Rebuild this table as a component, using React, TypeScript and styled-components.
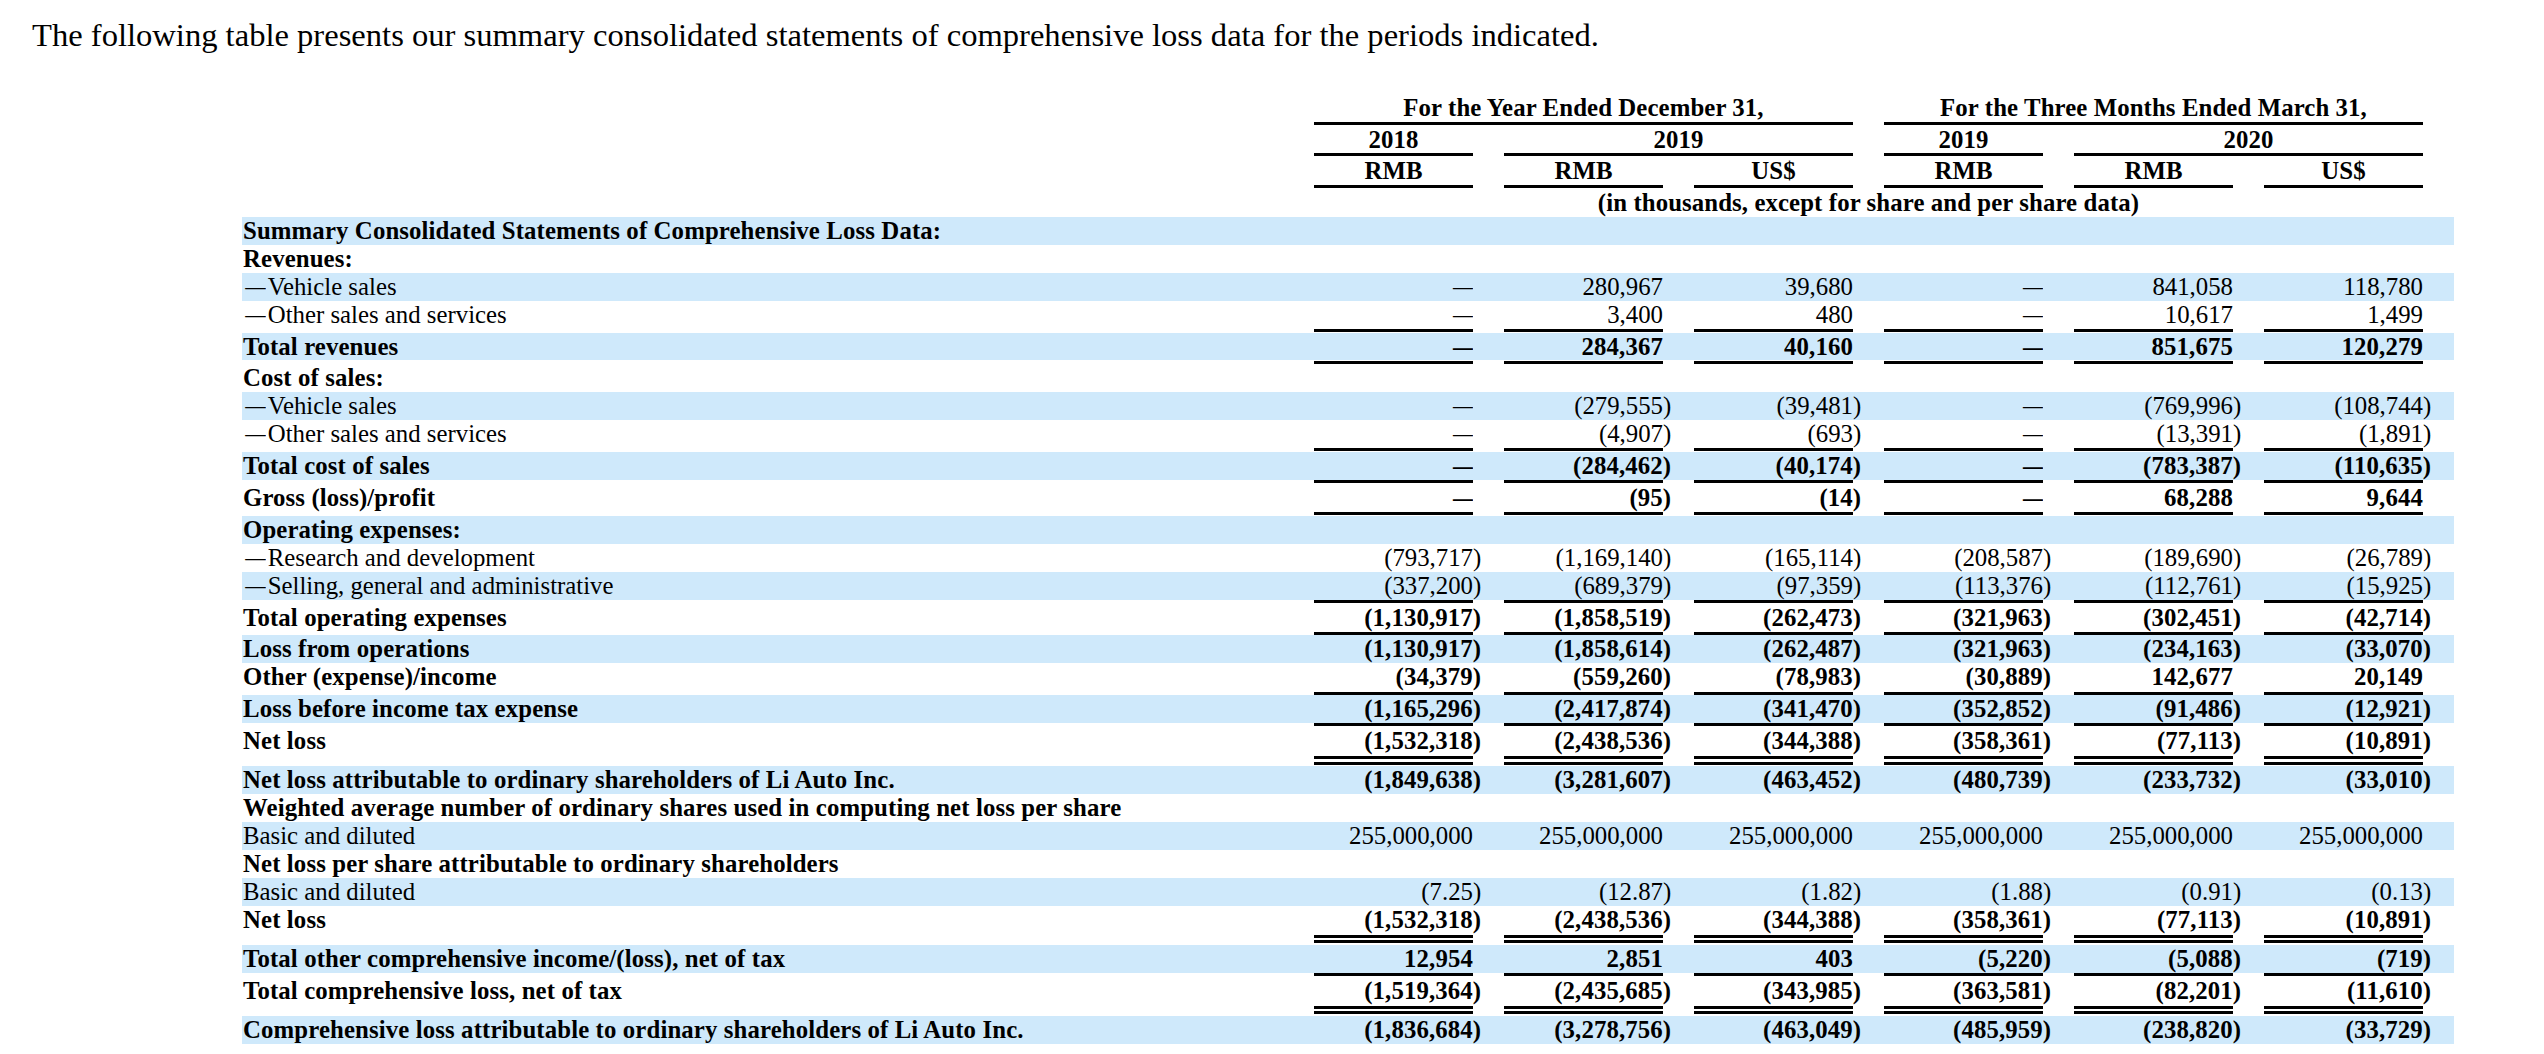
import React from "react";
import styled, { createGlobalStyle } from "styled-components";

const STRIPE = "#cfe9fb";
const COLS = "1fr repeat(6, 31px 159px) 31px";

const GlobalStyle = createGlobalStyle`
  html, body { margin: 0; padding: 0; background: #ffffff; }
  body {
    font-family: "Liberation Serif", "Times New Roman", Times, serif;
    color: #000;
  }
`;

const Page = styled.div`
  width: 2544px;
  min-height: 1054px;
  box-sizing: border-box;
  padding: 16px 0 0 32px;
`;

const Intro = styled.p`
  margin: 0;
  font-size: 32.6px;
  line-height: 38px;
  white-space: nowrap;
`;

const Table = styled.div`
  width: 2212px;
  margin: 40px 0 0 210px;
  font-size: 24.8px;
  line-height: 27.9px;
`;

const HeadRow = styled.div<{ $last?: boolean }>`
  display: grid;
  grid-template-columns: ${COLS};
  align-items: start;
  padding-bottom: ${(p) => (p.$last ? 0.6 : 0)}px;
`;

const HeadCell = styled.div<{ $from: number; $to: number; $rule?: boolean }>`
  grid-column: ${(p) => p.$from} / ${(p) => p.$to};
  text-align: center;
  font-weight: 700;
  letter-spacing: 0.1px;
  white-space: nowrap;
  border-bottom: ${(p) => (p.$rule ? "3.4px solid #000" : "0")};
  margin-bottom: ${(p) => (p.$rule ? 0.6 : 0)}px;
`;

const Row = styled.div<{ $shade: boolean; $bold?: boolean }>`
  display: grid;
  grid-template-columns: ${COLS};
  height: 27.9px;
  background: ${(p) => (p.$shade ? STRIPE : "transparent")};
  font-weight: ${(p) => (p.$bold ? 700 : 400)};
  letter-spacing: ${(p) => (p.$bold ? "0.12px" : "0")};
`;

const Label = styled.div`
  grid-column: 1 / 2;
  padding-left: 1px;
  white-space: nowrap;
`;

const LabelDash = styled.span`
  display: inline-block;
  transform: scaleX(0.82);
  transform-origin: center;
`;

const Num = styled.div<{ $col: number }>`
  grid-column: ${(p) => p.$col * 2 + 1};
  text-align: right;
  white-space: nowrap;
`;

const Close = styled.span`
  margin-right: -0.333em;
`;

const Dash = styled.span`
  display: inline-block;
  transform: scaleX(0.8);
  transform-origin: right center;
`;

const RuleRow = styled.div<{ $double?: boolean }>`
  display: grid;
  grid-template-columns: ${COLS};
  align-items: start;
  height: ${(p) => (p.$double ? 11.2 : 4)}px;
`;

const RuleSeg = styled.div<{ $col: number; $double?: boolean }>`
  grid-column: ${(p) => p.$col * 2 + 1};
  box-sizing: content-box;
  height: ${(p) => (p.$double ? 2.7 : 0)}px;
  border-top: 3.4px solid #000;
  border-bottom: ${(p) => (p.$double ? "3.3px solid #000" : "0")};
  margin-top: ${(p) => (p.$double ? 1.2 : 0.3)}px;
`;

type Rule = "single" | "double";
type Line = {
  label: string;
  bold?: boolean;
  dash?: boolean;
  values?: string[];
  rule?: Rule;
};

const D = "—";

const LINES: Line[] = [
  { label: "Summary Consolidated Statements of Comprehensive Loss Data:", bold: true },
  { label: "Revenues:", bold: true },
  { label: "Vehicle sales", dash: true, values: [D, "280,967", "39,680", D, "841,058", "118,780"] },
  { label: "Other sales and services", dash: true, values: [D, "3,400", "480", D, "10,617", "1,499"], rule: "single" },
  { label: "Total revenues", bold: true, values: [D, "284,367", "40,160", D, "851,675", "120,279"], rule: "single" },
  { label: "Cost of sales:", bold: true },
  { label: "Vehicle sales", dash: true, values: [D, "(279,555)", "(39,481)", D, "(769,996)", "(108,744)"] },
  { label: "Other sales and services", dash: true, values: [D, "(4,907)", "(693)", D, "(13,391)", "(1,891)"], rule: "single" },
  { label: "Total cost of sales", bold: true, values: [D, "(284,462)", "(40,174)", D, "(783,387)", "(110,635)"], rule: "single" },
  { label: "Gross (loss)/profit", bold: true, values: [D, "(95)", "(14)", D, "68,288", "9,644"], rule: "single" },
  { label: "Operating expenses:", bold: true },
  { label: "Research and development", dash: true, values: ["(793,717)", "(1,169,140)", "(165,114)", "(208,587)", "(189,690)", "(26,789)"] },
  { label: "Selling, general and administrative", dash: true, values: ["(337,200)", "(689,379)", "(97,359)", "(113,376)", "(112,761)", "(15,925)"], rule: "single" },
  { label: "Total operating expenses", bold: true, values: ["(1,130,917)", "(1,858,519)", "(262,473)", "(321,963)", "(302,451)", "(42,714)"], rule: "single" },
  { label: "Loss from operations", bold: true, values: ["(1,130,917)", "(1,858,614)", "(262,487)", "(321,963)", "(234,163)", "(33,070)"] },
  { label: "Other (expense)/income", bold: true, values: ["(34,379)", "(559,260)", "(78,983)", "(30,889)", "142,677", "20,149"], rule: "single" },
  { label: "Loss before income tax expense", bold: true, values: ["(1,165,296)", "(2,417,874)", "(341,470)", "(352,852)", "(91,486)", "(12,921)"], rule: "single" },
  { label: "Net loss", bold: true, values: ["(1,532,318)", "(2,438,536)", "(344,388)", "(358,361)", "(77,113)", "(10,891)"], rule: "double" },
  { label: "Net loss attributable to ordinary shareholders of Li Auto Inc.", bold: true, values: ["(1,849,638)", "(3,281,607)", "(463,452)", "(480,739)", "(233,732)", "(33,010)"] },
  { label: "Weighted average number of ordinary shares used in computing net loss per share", bold: true },
  { label: "Basic and diluted", values: ["255,000,000", "255,000,000", "255,000,000", "255,000,000", "255,000,000", "255,000,000"] },
  { label: "Net loss per share attributable to ordinary shareholders", bold: true },
  { label: "Basic and diluted", values: ["(7.25)", "(12.87)", "(1.82)", "(1.88)", "(0.91)", "(0.13)"] },
  { label: "Net loss", bold: true, values: ["(1,532,318)", "(2,438,536)", "(344,388)", "(358,361)", "(77,113)", "(10,891)"], rule: "double" },
  { label: "Total other comprehensive income/(loss), net of tax", bold: true, values: ["12,954", "2,851", "403", "(5,220)", "(5,088)", "(719)"], rule: "single" },
  { label: "Total comprehensive loss, net of tax", bold: true, values: ["(1,519,364)", "(2,435,685)", "(343,985)", "(363,581)", "(82,201)", "(11,610)"], rule: "double" },
  { label: "Comprehensive loss attributable to ordinary shareholders of Li Auto Inc.", bold: true, values: ["(1,836,684)", "(3,278,756)", "(463,049)", "(485,959)", "(238,820)", "(33,729)"] },
];

const COL_IDX = [1, 2, 3, 4, 5, 6];

function Value({ v }: { v: string }) {
  if (v === D) return <Dash>{D}</Dash>;
  if (v.startsWith("(") && v.endsWith(")")) {
    return (
      <>
        {v.slice(0, -1)}
        <Close>)</Close>
      </>
    );
  }
  return <>{v}</>;
}

function Header() {
  return (
    <>
      <HeadRow>
        <HeadCell $from={3} $to={8} $rule>For the Year Ended December 31,</HeadCell>
        <HeadCell $from={9} $to={14} $rule>For the Three Months Ended March 31,</HeadCell>
      </HeadRow>
      <HeadRow>
        <HeadCell $from={3} $to={4} $rule>2018</HeadCell>
        <HeadCell $from={5} $to={8} $rule>2019</HeadCell>
        <HeadCell $from={9} $to={10} $rule>2019</HeadCell>
        <HeadCell $from={11} $to={14} $rule>2020</HeadCell>
      </HeadRow>
      <HeadRow>
        {["RMB", "RMB", "US$", "RMB", "RMB", "US$"].map((c, i) => (
          <HeadCell key={i} $from={2 * i + 3} $to={2 * i + 4} $rule>
            {c}
          </HeadCell>
        ))}
      </HeadRow>
      <HeadRow $last>
        <HeadCell $from={3} $to={14}>(in thousands, except for share and per share data)</HeadCell>
      </HeadRow>
    </>
  );
}

export default function App() {
  return (
    <>
      <GlobalStyle />
      <Page>
        <Intro>
          The following table presents our summary consolidated statements of comprehensive loss data for the periods indicated.
        </Intro>
        <Table>
          <Header />
          {LINES.map((line, i) => (
            <React.Fragment key={i}>
              <Row $shade={i % 2 === 0} $bold={line.bold}>
                <Label>
                  {line.dash && <LabelDash>—</LabelDash>}
                  {line.label}
                </Label>
                {line.values?.map((v, j) => (
                  <Num key={j} $col={j + 1}>
                    <Value v={v} />
                  </Num>
                ))}
              </Row>
              {line.rule && (
                <RuleRow $double={line.rule === "double"}>
                  {COL_IDX.map((c) => (
                    <RuleSeg key={c} $col={c} $double={line.rule === "double"} />
                  ))}
                </RuleRow>
              )}
            </React.Fragment>
          ))}
        </Table>
      </Page>
    </>
  );
}
